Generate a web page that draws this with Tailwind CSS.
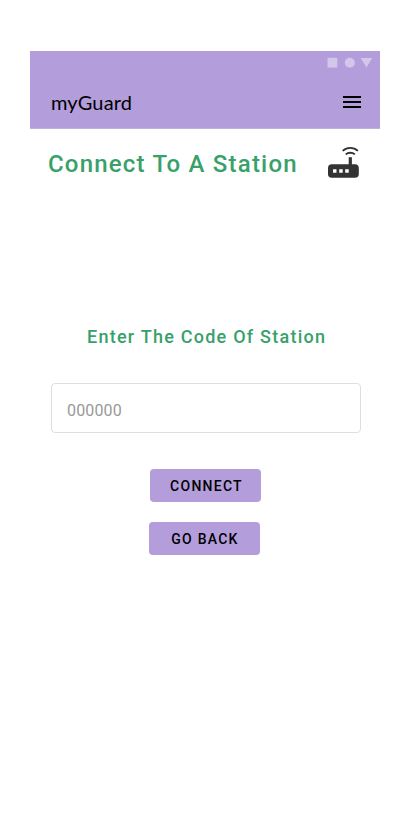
<!DOCTYPE html>
<html lang="en">
<head>
<meta charset="utf-8">
<title>myGuard</title>
<script src="https://cdn.jsdelivr.net/npm/@tailwindcss/browser@4"></script>
</head>
<body class="bg-white">
<div class="mx-[30px] mt-[51px] flex h-[722px] w-[350px] flex-col font-[Roboto,sans-serif]">
  <header class="flex h-[78px] shrink-0 flex-col border-b border-[#c1afe1] bg-[#b39ddb]">
    <div class="flex h-6 items-center justify-end pr-[7px]">
      <svg class="h-6 w-[48px]" viewBox="0 0 48 24" fill="#d3c6eb">
        <rect x="2.5" y="6.8" width="9.8" height="9.8"/>
        <circle cx="24.8" cy="11.8" r="5"/>
        <path d="M35.7 7h11.6l-5.8 9.6z"/>
      </svg>
    </div>
    <div class="flex h-[53px] items-center justify-between pr-[19px] pl-[21px]">
      <h1 class="font-[Lato,sans-serif] text-[20px] leading-6 tracking-[0.15px] text-black">myGuard</h1>
      <button class="flex h-3 w-[18px] flex-col justify-between" aria-label="Menu">
        <span class="h-0.5 w-full bg-black"></span>
        <span class="h-0.5 w-full bg-black"></span>
        <span class="h-0.5 w-full bg-black"></span>
      </button>
    </div>
  </header>
  <main class="flex flex-col">
    <div class="flex h-[70px] justify-between pr-[18px] pl-[18px]">
      <h2 class="pt-[19px] text-[24px] leading-8 font-medium tracking-[1.2px] whitespace-nowrap text-[#38a169]">Connect To A Station</h2>
      <svg class="mt-[17px] h-[34px] w-[34px]" viewBox="0 0 34 34" fill="none" stroke="#333">
        <path d="M14.700 4.900c4.400-4 10.800-4 15.200 0M17.700 8.400c2.600-2.300 6.600-2.300 9.200 0" stroke-width="1.900"/>
        <path d="M22.300 11.200v8" stroke-width="3.200"/>
        <path fill="#333" stroke="none" fill-rule="evenodd" d="M0 22a3.800 3.800 0 0 1 3.800-3.800h23.200a3.800 3.800 0 0 1 3.800 3.800v6a3.800 3.800 0 0 1-3.800 3.800H3.800a3.800 3.800 0 0 1-3.800-3.800zM5 23.200v3.500h3.500v-3.500zM11.200 23.200v3.500h3.500v-3.500zM17.200 23.200v3.500h3.500v-3.500z"/>
      </svg>
    </div>
    <label for="code" class="mt-[126px] ml-[57px] text-[18px] leading-6 font-medium tracking-[1.24px] whitespace-nowrap text-[#38a169]">Enter The Code Of Station</label>
    <input id="code" placeholder="000000" class="mt-[34px] ml-[21px] h-[50px] w-[310px] rounded-[4px] border border-[#dedede] bg-white px-[15px] pt-[5px] text-[16px] tracking-[0.15px] text-black placeholder:text-[#999]">
    <button class="mt-9 ml-[120px] h-[33px] w-[111px] rounded-[4px] bg-[#b39ddb] pt-px pl-[2px] text-[14px] leading-4 font-medium tracking-[1.25px] text-black">CONNECT</button>
    <button class="mt-5 ml-[119px] h-[33px] w-[111px] rounded-[4px] bg-[#b39ddb] pt-px pl-[1px] text-[14px] leading-4 font-medium tracking-[1.25px] text-black">GO BACK</button>
  </main>
</div>
</body>
</html>
